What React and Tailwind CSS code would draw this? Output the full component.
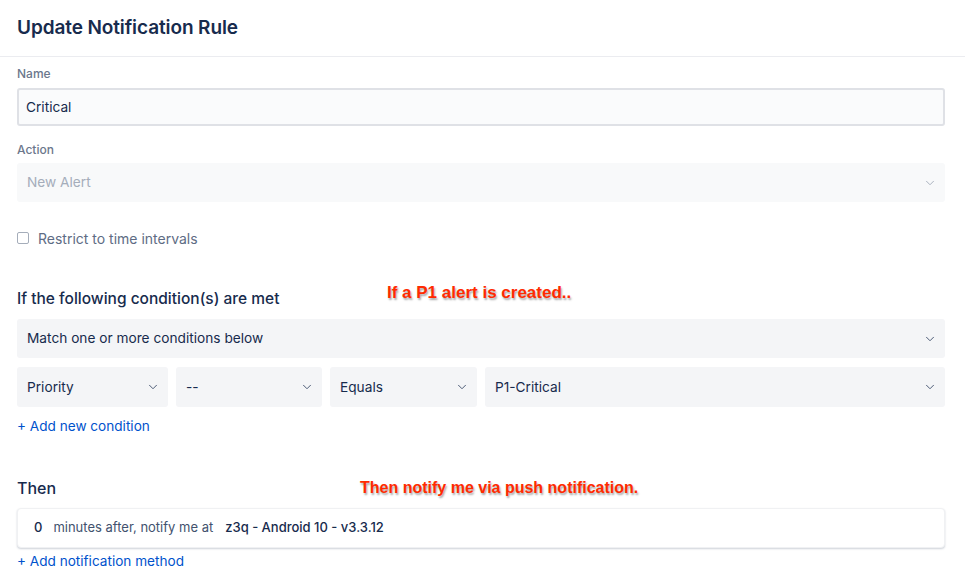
import { ChevronDown } from "lucide-react";

function Select({ value, className = "", muted = false, tone = "bg-[#f4f5f7]" }) {
  return (
    <div
      className={`flex h-10 items-center justify-between rounded-[3px] pl-[10px] pr-[8px] ${tone} ${className}`}
    >
      <span className={`text-[13.7px] ${muted ? "text-[#a5adba]" : "text-[#172b4d]"}`}>{value}</span>
      <ChevronDown
        size={14}
        strokeWidth={1.6}
        className={muted ? "text-[#a5adba]" : "text-[#42526e]"}
      />
    </div>
  );
}

function Note({ children, className = "" }) {
  return (
    <span
      className={`absolute whitespace-nowrap font-bold leading-[20px] text-[#ff2a00] [font-family:'Liberation_Sans',Arial,sans-serif] [text-shadow:1px_2px_2px_rgba(0,0,0,0.35)] ${className}`}
    >
      {children}
    </span>
  );
}

export default function App() {
  return (
    <div className="h-[570px] w-[965px] overflow-hidden bg-white text-[#172b4d] [font-family:Inter,'Noto_Sans',sans-serif]">
      <div className="flex h-[57px] items-center border-b border-[#ebecf0] px-[17px]">
        <h1 className="text-[19px] font-semibold tracking-[-0.1px]">Update Notification Rule</h1>
      </div>

      <div className="w-[945px] pl-[17px]">
        <div className="mt-[9px] text-[12px] font-medium leading-[16px] text-[#6b778c]">Name</div>
        <div className="mt-[6px] flex h-[38px] items-center rounded-[3px] border-2 border-[#dfe1e6] bg-[#fafbfc] px-[7px] text-[13.7px]">
          Critical
        </div>

        <div className="mt-[16px] text-[12px] font-medium leading-[16px] text-[#6b778c]">Action</div>
        <Select
          value="New Alert"
          muted
          tone="bg-[#f8f9fa]"
          className="mt-[5px] h-[39px]"
        />

        <label className="mt-[26px] flex h-[20px] items-center gap-[9px]">
          <span className="h-[12px] w-[12px] rounded-[2px] border border-[#a5adba] bg-white" />
          <span className="text-[14px] text-[#5e6c84]">Restrict to time intervals</span>
        </label>

        <div className="relative mt-[41px]">
          <h2 className="text-[15.5px] font-medium leading-[20px]">If the following condition(s) are met</h2>
          <Note className="left-[370px] top-[-6px] text-[17px]">If a P1 alert is created..</Note>
        </div>
        <Select value="Match one or more conditions below" className="mt-[10px] h-[39px]" />

        <div className="mt-[9px] flex gap-[8px]">
          <Select value="Priority" className="w-[151px]" />
          <Select value="--" className="w-[146px]" />
          <Select value="Equals" className="w-[147px]" />
          <Select value="P1-Critical" className="flex-1" />
        </div>

        <div className="mt-[9px] text-[13.6px] leading-[20px] text-[#0052cc]">+ Add new condition</div>

        <div className="relative mt-[42px]">
          <h2 className="text-[16px] font-medium leading-[20px]">Then</h2>
          <Note className="left-[343px] top-[0px] text-[16px]">Then notify me via push notification.</Note>
        </div>
        <div className="mt-[10px] flex h-[40px] items-center rounded-[4px] border border-[#f0f1f3] bg-white pl-[16px] text-[13px] shadow-[0_1px_2px_rgba(9,30,66,0.2)]">
          <span className="font-medium">0</span>
          <span className="ml-[11px] text-[#42526e]">minutes after, notify me at</span>
          <span className="ml-[12px] font-medium">z3q - Android 10 - v3.3.12</span>
        </div>
        <div className="mt-[3px] text-[13.6px] leading-[20px] text-[#0052cc]">+ Add notification method</div>
      </div>
    </div>
  );
}
